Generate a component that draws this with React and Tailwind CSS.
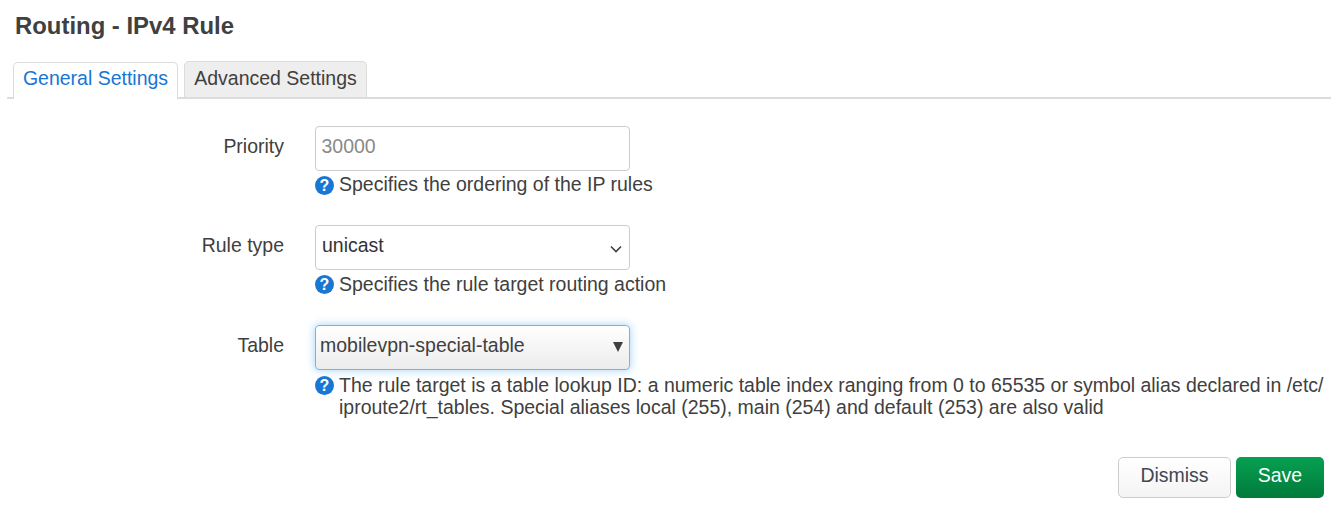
function HelpIcon({ className = "mt-[2px]" }) {
  return (
    <svg width="19" height="19" viewBox="0 0 19 19" className={"shrink-0 " + className}>
      <circle cx="9.5" cy="9.5" r="9.5" fill="#1976d2" />
      <text x="9.5" y="15.2" textAnchor="middle" fontSize="16" fontWeight="700" fill="#fff" fontFamily="Liberation Sans, sans-serif">?</text>
    </svg>
  );
}

function Help({ children, className = "mt-[3px]", iconClass }) {
  return (
    <div className={"flex gap-[5px] leading-[22px] text-[#404040] " + className}>
      <HelpIcon className={iconClass} />
      <div className="whitespace-nowrap">{children}</div>
    </div>
  );
}

function Row({ label, children, help, className, helpClass, iconClass }) {
  return (
    <div className={"flex " + className}>
      <div className="w-[284px] shrink-0 text-right pt-[7px] leading-[26px] text-[#404040]">{label}</div>
      <div className="ml-[31px] w-[1008px]">
        {children}
        <Help className={helpClass} iconClass={iconClass}>{help}</Help>
      </div>
    </div>
  );
}

export default function App() {
  return (
    <div className="w-[1336px] h-[514px] bg-white overflow-hidden text-[19.49px] text-[#404040] font-['Liberation_Sans',Arial,sans-serif]">
      <h1 className="pl-[15px] pt-[12px] text-[23.9px] leading-[28px] font-bold text-[#404040]">Routing - IPv4 Rule</h1>
      <div className="ml-[7px] mr-[5px] mt-[21px] h-[38px] flex items-end gap-[6px] pl-[6px] border-b-2 border-[#dcdcdc]">
        <div className="w-[165px] h-[37px] -mb-[2px] bg-white border border-[#dcdcdc] border-b-0 rounded-t-[5px] text-[#1976d2] text-center leading-[31px]">General Settings</div>
        <div className="w-[183px] h-[36px] bg-[#eeeeee] border border-[#dcdcdc] border-b-0 rounded-t-[5px] text-center leading-[32px]">Advanced Settings</div>
      </div>

      <Row className="mt-[27px]" helpClass="mt-[2px]" iconClass="mt-[3px]" label="Priority" help="Specifies the ordering of the IP rules">
        <input
          readOnly
          placeholder="30000"
          className="block w-[315px] h-[45px] pl-[5.5px] pr-[6px] pb-[4px] bg-white border border-[#cccccc] rounded-[4px] outline-none placeholder:text-[#8a8a8a]"
        />
      </Row>

      <Row className="mt-[30px]" label="Rule type" help="Specifies the rule target routing action">
        <div className="relative w-[315px] h-[45px] px-[6px] bg-white border border-[#cccccc] rounded-[4px] leading-[38px] text-[#333333]">
          unicast
          <svg width="12" height="8" viewBox="0 0 12 8" className="absolute right-[7px] top-[19px]" fill="none" stroke="#404040" strokeWidth="1.6">
            <path d="M1 1.5 L6 6.5 L11 1.5" />
          </svg>
        </div>
      </Row>

      <Row
        className="mt-[30px]"
        helpClass="mt-[4px]"
        label="Table"
        help={<>The rule target is a table lookup ID: a numeric table index ranging from 0 to 65535 or symbol alias declared in /etc/<br />iproute2/rt_tables. Special aliases local (255), main (254) and default (253) are also valid</>}
      >
        <div className="relative w-[315px] h-[45px] pl-[4px] border border-[#74b3ee] rounded-[4px] leading-[38px] bg-gradient-to-b from-white to-[#ececec] shadow-[0_0_8px_rgba(82,168,236,0.55)]">
          mobilevpn-special-table
          <span className="absolute right-[6px] top-[16px] w-0 h-0 border-x-[5px] border-x-transparent border-t-[10px] border-t-[#404040]" />
        </div>
      </Row>

      <div className="flex justify-end gap-[5px] mr-[12px] mt-[39px]">
        <button className="w-[113px] h-[41px] pb-[4px] border border-[#cccccc] rounded-[5px] bg-gradient-to-b from-white to-[#f4f4f4] text-[#404855]">Dismiss</button>
        <button className="w-[88px] h-[41px] pb-[4px] rounded-[5px] bg-gradient-to-b from-[#07a052] to-[#027a3a] text-white">Save</button>
      </div>
    </div>
  );
}
